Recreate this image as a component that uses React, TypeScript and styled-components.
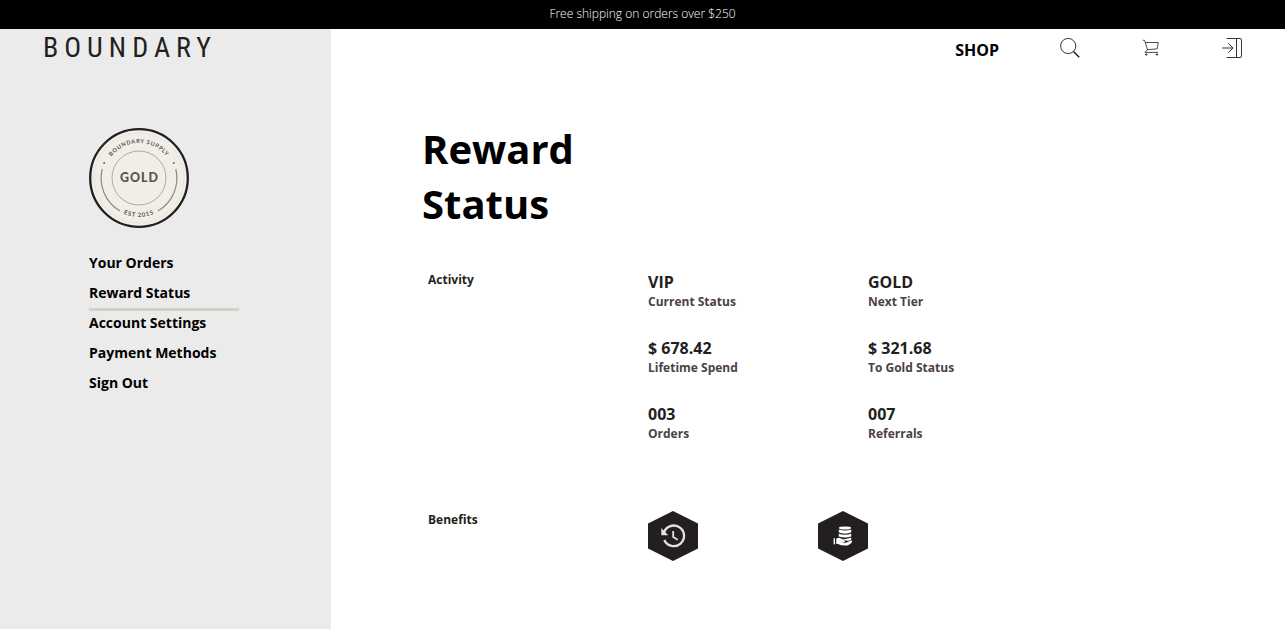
import React from "react";
import styled, { createGlobalStyle } from "styled-components";

const ink = "#231f20";

const GlobalStyle = createGlobalStyle`
  *, *::before, *::after { box-sizing: border-box; }
  body {
    margin: 0;
    background: #fff;
    color: #000;
    font-family: "Open Sans", "Noto Sans", sans-serif;
  }
  h1, h2, p, ul { margin: 0; padding: 0; }
  ul { list-style: none; }
  a { color: inherit; text-decoration: none; }
`;

const Page = styled.div`
  display: flex;
  flex-direction: column;
  min-height: 100vh;
`;

const Banner = styled.p`
  padding: 5px 0 7px;
  background: #000;
  color: #fff;
  font-size: 12px;
  font-weight: 300;
  line-height: 17px;
  text-align: center;
`;

const Body = styled.div`
  display: flex;
  flex: 1;
`;

const Sidebar = styled.aside`
  flex: 0 0 331px;
  padding: 4px 43px 40px;
  background: #ebebeb;
`;

const Logo = styled.a`
  display: block;
  color: ${ink};
  font-family: "Roboto Condensed", "Open Sans Condensed", "Noto Sans CJK SC", sans-serif;
  font-size: 28px;
  line-height: 30px;
  letter-spacing: 6px;
  white-space: nowrap;
`;

const Account = styled.div`
  width: 150px;
  margin: 65px 0 0 46px;
`;

const Badge = styled.svg`
  display: block;
  width: 100px;
  height: 100px;
`;

const Menu = styled.ul`
  margin-top: 23px;
`;

const MenuLink = styled.a<{ $active?: boolean }>`
  display: block;
  height: 30px;
  padding-top: 2px;
  border-bottom: 3px solid ${(p) => (p.$active ? "#d1d3c0" : "transparent")};
  font-size: 14px;
  font-weight: 700;
  line-height: 20px;
`;

const Main = styled.main`
  flex: 1;
  min-width: 0;
`;

const TopNav = styled.nav`
  display: flex;
  justify-content: flex-end;
  align-items: center;
  gap: 61px;
  height: 38px;
  padding-right: 43px;
`;

const ShopLink = styled.a`
  padding-top: 4px;
  font-size: 16px;
  font-weight: 700;
  line-height: 22px;
`;

const IconButton = styled.button`
  display: block;
  width: 20px;
  height: 20px;
  padding: 0;
  border: 0;
  background: none;
  cursor: pointer;

  svg {
    display: block;
    overflow: visible;
    fill: none;
    stroke: ${ink};
  }
`;

const Content = styled.div`
  padding: 54px 40px 40px 91px;
`;

const Title = styled.h1`
  max-width: 220px;
  font-size: 40px;
  font-weight: 700;
  line-height: 55px;
`;

const Section = styled.section<{ $gap: number }>`
  display: grid;
  grid-template-columns: 220px 1fr;
  margin-top: ${(p) => p.$gap}px;
  padding-left: 6px;
`;

const SectionTitle = styled.h2`
  color: ${ink};
  font-size: 12px;
  font-weight: 700;
  line-height: 18px;
`;

const Stats = styled.div`
  display: grid;
  grid-template-columns: 220px 220px;
  row-gap: 26px;
`;

const Value = styled.p`
  color: ${ink};
  font-size: 16px;
  font-weight: 700;
  line-height: 22px;
`;

const Label = styled.p`
  color: #4b4243;
  font-size: 12px;
  font-weight: 700;
  line-height: 18px;
`;

const Benefits = styled.div`
  display: flex;
  gap: 120px;
`;

const Hexagon = styled.svg`
  display: block;
  width: 50px;
  height: 50px;
`;

const menu = ["Your Orders", "Reward Status", "Account Settings", "Payment Methods", "Sign Out"];

const stats = [
  ["VIP", "Current Status"],
  ["GOLD", "Next Tier"],
  ["$ 678.42", "Lifetime Spend"],
  ["$ 321.68", "To Gold Status"],
  ["003", "Orders"],
  ["007", "Referrals"],
];

function GoldBadge() {
  return (
    <Badge viewBox="0 0 100 100" role="img" aria-label="Gold tier">
      <defs>
        <path id="arc-top" d="M15 50 A35 35 0 0 1 85 50" />
        <path id="arc-bottom" d="M11 50 A39 39 0 0 0 89 50" />
      </defs>
      <circle cx="50" cy="50" r="48.8" fill="#f1ede7" stroke={ink} strokeWidth="2.3" />
      <circle cx="50" cy="50" r="45" fill="none" stroke="#e2ded8" strokeWidth="0.6" />
      <circle cx="50" cy="50" r="27" fill="none" stroke="#a5a19c" strokeWidth="0.9" />
      <path
        d="M13.2 41 A38 38 0 0 0 31 82.9 M86.8 41 A38 38 0 0 1 69 82.9"
        fill="none"
        stroke="#8b8784"
        strokeWidth="1.2"
      />
      <circle cx="15.2" cy="35" r="0.9" fill="#5b5757" />
      <circle cx="84.8" cy="35" r="0.9" fill="#5b5757" />
      <g fill="#57514f" fontFamily="Lato, sans-serif" fontWeight="700" textAnchor="middle">
        <text fontSize="5.6" letterSpacing="0.7">
          <textPath href="#arc-top" startOffset="50%">BOUNDARY SUPPLY</textPath>
        </text>
        <text fontSize="6" letterSpacing="0.8">
          <textPath href="#arc-bottom" startOffset="50%">EST 2015</textPath>
        </text>
        <text x="50.5" y="54.2" fontSize="12.4" letterSpacing="1" fontWeight="900">GOLD</text>
      </g>
    </Badge>
  );
}

function SearchIcon() {
  return (
    <svg width="20" height="20" viewBox="0 0 20 20">
      <circle cx="8.2" cy="8" r="7.6" strokeWidth="0.9" />
      <path d="M13.4 13.5 L19.3 19.3" strokeWidth="1.5" />
    </svg>
  );
}

function CartIcon() {
  return (
    <svg width="20" height="20" viewBox="0 0 20 20" strokeWidth="0.8">
      <path d="M1.8 2.3 H3.6 L6.6 12 M4.3 4.5 H17.3 L16.1 10.9 L6.3 11.7 L4.1 14.2 M3.8 14.4 H17" />
      <circle cx="5.2" cy="16.5" r="0.7" fill={ink} />
      <circle cx="16" cy="16.5" r="0.7" fill={ink} />
    </svg>
  );
}

function SignInIcon() {
  return (
    <svg width="20" height="20" viewBox="0 0 20 20" strokeWidth="0.9">
      <path d="M4.5 0.5 H18 Q19.5 0.5 19.5 2 V18 Q19.5 19.5 18 19.5 H4.5 M14.5 0.5 V19.5" />
      <path d="M0 10 H11 M6.2 5.2 L11 10 L6.2 14.8" />
    </svg>
  );
}

function HistoryBenefit() {
  return (
    <Hexagon viewBox="0 0 50 50" role="img" aria-label="Extended returns">
      <path d="M25 0 L50 12.5 V37.5 L25 50 L0 37.5 V12.5 Z" fill={ink} />
      <path d="M15.7 22.5 A10.3 10.3 0 1 1 16.3 29" fill="none" stroke="#e3e2e2" strokeWidth="2.3" />
      <path d="M13.3 17 V24.3 H20.2 Z" fill="#e3e2e2" />
      <path d="M25.2 20 V26 L29.7 28.8" fill="none" stroke="#e3e2e2" strokeWidth="1.8" />
    </Hexagon>
  );
}

function CoinsBenefit() {
  return (
    <Hexagon viewBox="0 0 50 50" role="img" aria-label="Cash back">
      <path d="M25 0 L50 12.5 V37.5 L25 50 L0 37.5 V12.5 Z" fill={ink} />
      <ellipse cx="27" cy="17" rx="6.2" ry="1.6" fill="#fff" />
      <g fill="#fff">
        <path d="M20.8 18.5 Q27 20.6 33.2 18.5 V21.5 Q27 23.8 20.8 21.5 Z" />
        <path d="M20.8 22.7 Q27 25 33.2 22.7 V25.4 Q27 27.7 20.8 25.4 Z" />
        <path d="M23.5 27.5 Q28 29 33.2 26.6 V29 Q31 30 28 29.4 Z" />
        <path d="M17 27.3 H15.6 V33.3 H17 Z" />
        <path d="M18.2 28 Q20 25.9 22.5 27.3 L26.8 29.6 Q28 30.8 26.3 31 L23.6 30.8 Q27.4 32.7 30 30.8 L33.2 29.5 Q34.8 29.7 33.9 31.2 Q31.2 34.6 27.5 34.6 Q22.7 34.6 20 33 L18.2 32.7 Z" />
      </g>
    </Hexagon>
  );
}

export default function App() {
  return (
    <Page>
      <GlobalStyle />
      <Banner>Free shipping on orders over $250</Banner>
      <Body>
        <Sidebar>
          <Logo href="#">BOUNDARY</Logo>
          <Account>
            <GoldBadge />
            <Menu>
              {menu.map((item) => (
                <li key={item}>
                  <MenuLink href="#" $active={item === "Reward Status"}>{item}</MenuLink>
                </li>
              ))}
            </Menu>
          </Account>
        </Sidebar>
        <Main>
          <TopNav>
            <ShopLink href="#">SHOP</ShopLink>
            <IconButton aria-label="Search"><SearchIcon /></IconButton>
            <IconButton aria-label="Cart"><CartIcon /></IconButton>
            <IconButton aria-label="Sign in"><SignInIcon /></IconButton>
          </TopNav>
          <Content>
            <Title>Reward Status</Title>
            <Section $gap={40}>
              <SectionTitle>Activity</SectionTitle>
              <Stats>
                {stats.map(([value, label]) => (
                  <div key={label}>
                    <Value>{value}</Value>
                    <Label>{label}</Label>
                  </div>
                ))}
              </Stats>
            </Section>
            <Section $gap={68}>
              <SectionTitle>Benefits</SectionTitle>
              <Benefits>
                <HistoryBenefit />
                <CoinsBenefit />
              </Benefits>
            </Section>
          </Content>
        </Main>
      </Body>
    </Page>
  );
}
